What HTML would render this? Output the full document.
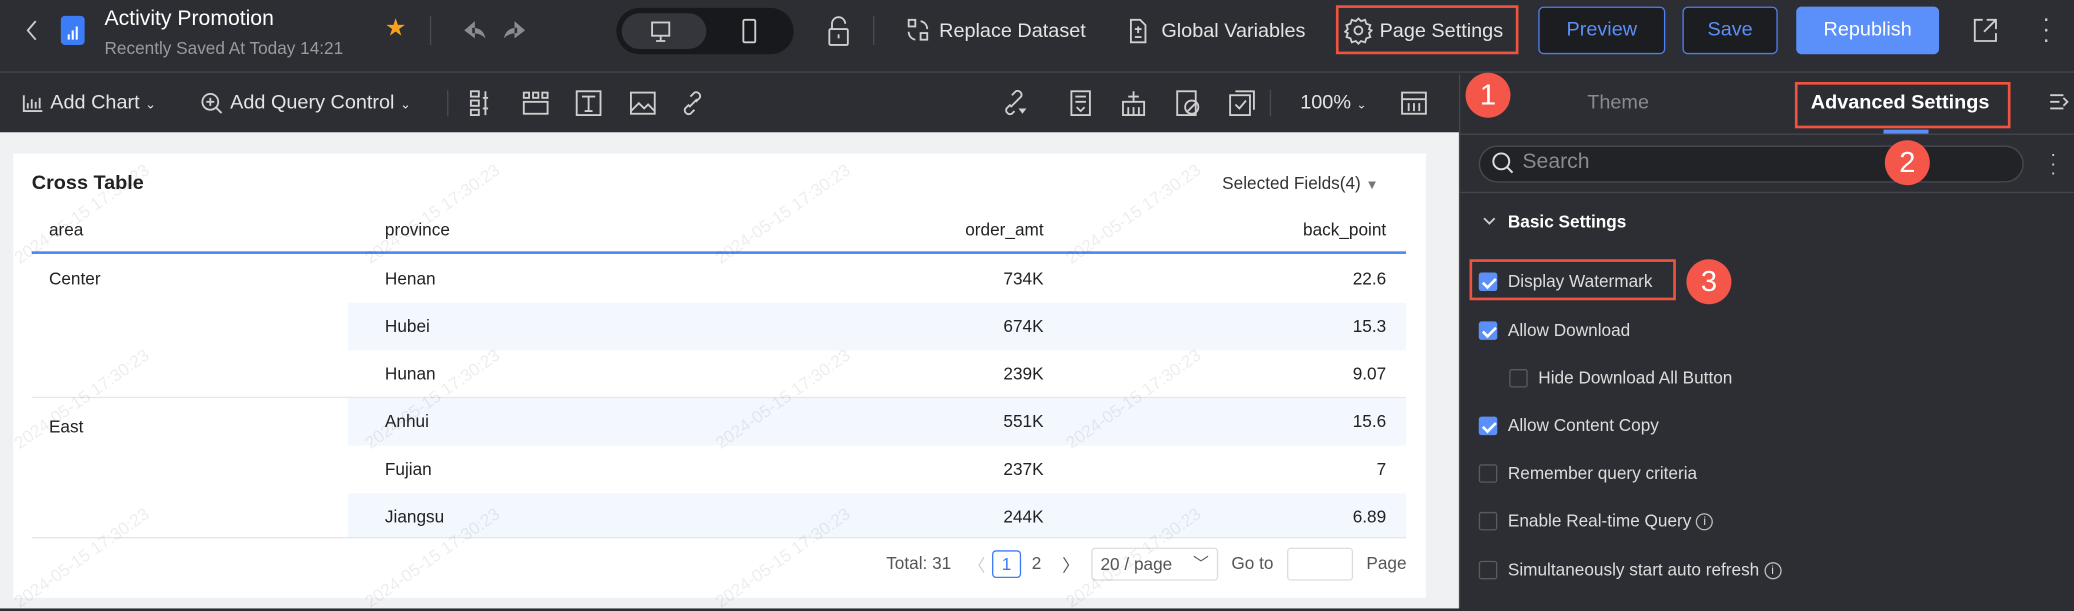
<!DOCTYPE html>
<html><head><meta charset="utf-8"><style>
*{box-sizing:border-box;margin:0;padding:0}
html,body{width:2074px;height:602px;overflow:hidden;background:#2d2e33}
#w{position:absolute;left:0;top:0;width:1568px;height:460px;transform:scale(1.32270);transform-origin:0 0;font-family:"Liberation Sans",sans-serif;color:#ddd;background:#2d2e33}
.a{position:absolute;white-space:nowrap}
.hd{left:0;top:0;width:1568px;height:55px;background:#2d2e33;border-bottom:1px solid #45464b}
.tb{left:0;top:56px;width:1568px;height:45px;background:#2d2e33}
.t14{font-size:15px;color:#e4e4e4}
.rb{border:2px solid #f0533f}
.badge{width:34px;height:34px;border-radius:50%;background:#f4574a;color:#fff;font-size:22px;text-align:center;line-height:34px}
.btn{height:36px;border-radius:4px;font-size:15px;text-align:center;line-height:34px}
.cb{width:14px;height:14px;border-radius:2px;border:1px solid #5a5b60;background:transparent}
.cb.on{background:#5b8ff9;border-color:#5b8ff9}
.cb.on:after{content:"";position:absolute;left:4px;top:1px;width:4px;height:8px;border:solid #fff;border-width:0 2px 2px 0;transform:rotate(45deg)}
.lbl{font-size:13px;color:#ddd}
.wm{font-size:13px;color:rgba(0,0,0,.07);transform:rotate(-35deg);transform-origin:0 0}
.td{font-size:13px;color:#222}
.ic{stroke:#cfcfcf;fill:none;stroke-width:1.4}
</style></head><body><div id="w">
<div class="a hd"></div>
<div class="a tb"></div>
<div class="a" style="left:0;top:100px;width:1103px;height:360px;background:#f0f1f3"></div>
<div class="a" style="left:1103px;top:56px;width:1px;height:404px;background:#45464b"></div>
<div class="a" style="left:1104px;top:101px;width:464px;height:1px;background:#45464b"></div>

<!-- header -->
<svg class="a" style="left:17px;top:12px" width="14" height="22"><path d="M10 4 L4 11 L10 18" class="ic" stroke-width="1.8"/></svg>
<div class="a" style="left:46px;top:12px;width:18px;height:22px;border-radius:3px;background:#3c7cf6"></div>
<svg class="a" style="left:46px;top:12px" width="18" height="22"><path d="M6 18V14M9 18V11M12 18V8" stroke="#fff" stroke-width="1.6"/></svg>
<div class="a" style="left:79px;top:6px;font-size:16px;color:#fff">Activity Promotion</div>
<div class="a" style="left:79px;top:29px;font-size:13px;color:#9a9a9e">Recently Saved At Today 14:21</div>
<div class="a" style="left:291px;top:11px;font-size:18px;color:#f7a21b">★</div>
<div class="a" style="left:325px;top:12px;width:1px;height:22px;background:#4a4b50"></div>
<svg class="a" style="left:347px;top:13px" width="66" height="20"><path d="M12 3 L4 10 L12 16 Z M10 8 C16 8 19 11 20 16 C17 13 14 12 10 12Z" fill="#8a8b90"/><path d="M42 3 L50 10 L42 16 Z M44 8 C38 8 35 11 34 16 C37 13 40 12 44 12Z" fill="#8a8b90"/></svg>
<div class="a" style="left:466px;top:6px;width:134px;height:35px;border-radius:18px;background:#18191c"></div>
<div class="a" style="left:470px;top:10px;width:64px;height:27px;border-radius:14px;background:#35363b"></div>
<svg class="a" style="left:490px;top:14px" width="20" height="20"><rect x="3" y="3" width="13" height="10" class="ic" stroke="#fff"/><path d="M9.5 13v4M6 17h7" class="ic" stroke="#fff"/></svg>
<svg class="a" style="left:557px;top:12px" width="20" height="24"><rect x="5" y="3" width="9" height="17" rx="1" class="ic"/></svg>
<svg class="a" style="left:624px;top:11px" width="20" height="26"><path d="M5 11V7a5 5 0 0 1 10 0" class="ic"/><rect x="3" y="11" width="14" height="12" rx="1" class="ic"/><path d="M10 15v3" class="ic"/></svg>
<div class="a" style="left:660px;top:12px;width:1px;height:22px;background:#4a4b50"></div>
<svg class="a" style="left:684px;top:13px" width="20" height="20"><rect x="3" y="2" width="5" height="5" class="ic"/><rect x="12" y="12" width="5" height="5" class="ic"/><path d="M12 3a6 6 0 0 1 5 6M8 17a6 6 0 0 1-5-6" class="ic"/></svg>
<div class="a t14" style="left:710px;top:15px">Replace Dataset</div>
<svg class="a" style="left:851px;top:12px" width="18" height="22"><path d="M4 3h7l4 4v13H4z" class="ic"/><path d="M7 10h5M9.5 8v5M7 16h5" class="ic"/></svg>
<div class="a t14" style="left:878px;top:15px">Global Variables</div>
<div class="a rb" style="left:1010px;top:4px;width:138px;height:37px"></div>
<svg class="a" style="left:1016px;top:12px" width="22" height="22"><circle cx="11" cy="11" r="3" class="ic"/><path d="M11 2l2 2 3-1 1 3 3 1-1 3 2 1-2 2 1 3-3 1-1 3-3-1-2 2-2-2-3 1-1-3-3-1 1-3-2-1 2-2-1-3 3-1 1-3 3 1z" class="ic"/></svg>
<div class="a t14" style="left:1043px;top:15px">Page Settings</div>
<div class="a btn" style="left:1163px;top:5px;width:96px;border:1px solid #4d7ff0;color:#5b8ff9;background:#1c1d21">Preview</div>
<div class="a btn" style="left:1272px;top:5px;width:72px;border:1px solid #4d7ff0;color:#5b8ff9;background:#1c1d21">Save</div>
<div class="a btn" style="left:1358px;top:5px;width:108px;background:#5b8ff9;color:#fff;line-height:36px">Republish</div>
<svg class="a" style="left:1490px;top:12px" width="22" height="22"><path d="M9 3H3v16h16v-6M12 3h7v7M19 3l-9 9" class="ic"/></svg>
<div class="a" style="left:1544px;top:10px;color:#ccc;font-size:18px;line-height:8px;width:6px">·<br>·<br>·</div>

<!-- toolbar -->
<svg class="a" style="left:16px;top:70px" width="18" height="16"><path d="M2 2v12h14M5 12V8M8 12V5M11 12V7M14 12V4" class="ic"/></svg>
<div class="a t14" style="left:38px;top:69px">Add Chart <span style="font-size:10px">⌄</span></div>
<svg class="a" style="left:151px;top:69px" width="18" height="18"><circle cx="8" cy="8" r="6" class="ic"/><path d="M8 5v6M5 8h6M12.5 12.5l4 4" class="ic"/></svg>
<div class="a t14" style="left:174px;top:69px">Add Query Control <span style="font-size:10px">⌄</span></div>
<div class="a" style="left:338px;top:68px;width:1px;height:20px;background:#4a4b50"></div>
<svg class="a" style="left:354px;top:67px" width="200" height="22"><rect x="2" y="2" width="6" height="4" class="ic"/><rect x="2" y="9" width="6" height="4" class="ic"/><rect x="2" y="16" width="6" height="4" class="ic"/><path d="M13 2v18M11 7h4M11 15h4" class="ic"/>
<rect x="42" y="3" width="4" height="4" class="ic"/><rect x="49" y="3" width="4" height="4" class="ic"/><rect x="56" y="3" width="4" height="4" class="ic"/><rect x="42" y="10" width="18" height="9" class="ic"/>
<rect x="82" y="2" width="18" height="18" class="ic"/><path d="M86 6h10M91 6v11M88 17h6" class="ic"/>
<rect x="123" y="3" width="18" height="16" class="ic"/><path d="M123 17l6-6 4 4 3-3 5 5" class="ic"/>
<path d="M167 12l-3 3a3 3 0 0 0 4 4l3-3M172 10l3-3a3 3 0 0 0-4-4l-3 3M167 14l6-6" class="ic"/></svg>
<svg class="a" style="left:756px;top:67px" width="200" height="22"><path d="M8 12l-3 3a3 3 0 0 0 4 4l2-2M13 9l3-3a3 3 0 0 0-4-4l-3 3M8 14l6-6" class="ic"/><path d="M14 15h6l-3 4z" fill="#cfcfcf"/>
<rect x="54" y="2" width="14" height="18" class="ic"/><path d="M57 6h8M57 10h8M58 14l3 3 3-3" class="ic"/>
<path d="M93 10h16v10H93zM101 2v8M97 6h8M97 14v6M101 14v6M105 14v6" class="ic"/>
<rect x="134" y="2" width="14" height="18" class="ic"/><circle cx="145" cy="14" r="5" class="ic"/><path d="M141 18l8-8" class="ic"/>
<rect x="174" y="5" width="15" height="15" class="ic"/><path d="M178 2h14v14M178 12l3 3 5-6" class="ic"/></svg>
<div class="a" style="left:960px;top:68px;width:1px;height:20px;background:#4a4b50"></div>
<div class="a t14" style="left:983px;top:69px">100% <span style="font-size:9px">⌄</span></div>
<svg class="a" style="left:1058px;top:68px" width="22" height="20"><rect x="2" y="2" width="18" height="16" class="ic"/><path d="M2 7h18M7 10v6M11 10v6M15 10v6" class="ic"/></svg>

<div class="a badge" style="left:1108px;top:55px">1</div>
<div class="a" style="left:1200px;top:69px;font-size:15px;color:#8a8b90">Theme</div>
<div class="a rb" style="left:1357px;top:62px;width:163px;height:35px"></div>
<div class="a" style="left:1369px;top:69px;font-size:15px;font-weight:bold;color:#fff">Advanced Settings</div>
<div class="a" style="left:1424px;top:98px;width:34px;height:3px;background:#5b8ff9"></div>
<svg class="a" style="left:1548px;top:69px" width="18" height="18"><path d="M2 3h10M2 8h7M2 13h10M12 5l3 3-3 3" class="ic"/></svg>

<!-- right panel -->
<div class="a" style="left:1118px;top:110px;width:412px;height:28px;border-radius:14px;background:#222327;border:1px solid #4a4b50"></div>
<svg class="a" style="left:1127px;top:114px" width="20" height="20"><circle cx="8" cy="8" r="6" stroke="#ddd" fill="none" stroke-width="1.5"/><path d="M12.5 12.5l4 4" stroke="#ddd" stroke-width="1.5"/></svg>
<div class="a" style="left:1151px;top:114px;font-size:16px;color:#8a8b90">Search</div>
<div class="a badge" style="left:1425px;top:106px">2</div>
<div class="a" style="left:1550px;top:113px;color:#ccc;font-size:14px;line-height:7px;width:6px">·<br>·<br>·</div>
<div class="a" style="left:1104px;top:145px;width:464px;height:1px;background:#45464b"></div>
<svg class="a" style="left:1120px;top:162px" width="12" height="10"><path d="M2 3l4 4 4-4" class="ic"/></svg>
<div class="a" style="left:1140px;top:160px;font-size:13px;font-weight:bold;color:#fff">Basic Settings</div>
<div class="a rb" style="left:1111px;top:196px;width:156px;height:31px"></div>
<div class="a badge" style="left:1275px;top:196px">3</div>
<div class="a cb on" style="left:1118px;top:206px"></div><div class="a lbl" style="left:1140px;top:205px">Display Watermark</div>
<div class="a cb on" style="left:1118px;top:243px"></div><div class="a lbl" style="left:1140px;top:242px">Allow Download</div>
<div class="a cb" style="left:1141px;top:279px"></div><div class="a lbl" style="left:1163px;top:278px">Hide Download All Button</div>
<div class="a cb on" style="left:1118px;top:315px"></div><div class="a lbl" style="left:1140px;top:314px">Allow Content Copy</div>
<div class="a cb" style="left:1118px;top:351px"></div><div class="a lbl" style="left:1140px;top:350px">Remember query criteria</div>
<div class="a cb" style="left:1118px;top:387px"></div><div class="a lbl" style="left:1140px;top:386px">Enable Real-time Query <span style="display:inline-block;width:13px;height:13px;border:1px solid #bbb;border-radius:50%;font-size:9px;text-align:center;line-height:11px;vertical-align:1px">i</span></div>
<div class="a cb" style="left:1118px;top:424px"></div><div class="a lbl" style="left:1140px;top:423px">Simultaneously start auto refresh <span style="display:inline-block;width:13px;height:13px;border:1px solid #bbb;border-radius:50%;font-size:9px;text-align:center;line-height:11px;vertical-align:1px">i</span></div>

<!-- card -->
<div class="a" style="left:10px;top:116px;width:1068px;height:336px;background:#fff"></div>
<div class="a" style="left:24px;top:130px;font-size:15px;font-weight:bold;color:#222">Cross Table</div>
<div class="a td" style="left:924px;top:131px;color:#333">Selected Fields(4) <span style="color:#777;font-size:10px">▼</span></div>
<div class="a td" style="left:37px;top:166px">area</div>
<div class="a td" style="left:291px;top:166px">province</div>
<div class="a td" style="left:700px;top:166px;width:89px;text-align:right">order_amt</div>
<div class="a td" style="left:948px;top:166px;width:100px;text-align:right">back_point</div>
<div class="a" style="left:24px;top:190px;width:1039px;height:1.5px;background:#4d88f7"></div>
<div class="a" style="left:263px;top:229px;width:800px;height:36px;background:#f3f7fe"></div>
<div class="a" style="left:263px;top:301px;width:800px;height:36px;background:#f3f7fe"></div>
<div class="a" style="left:263px;top:373px;width:800px;height:33px;background:#f3f7fe"></div>
<div class="a" style="left:24px;top:300px;width:1039px;height:1px;background:#e6e7ea"></div>
<div class="a" style="left:24px;top:406px;width:1039px;height:1px;background:#e6e7ea"></div>
<div class="a td" style="left:37px;top:203px">Center</div>
<div class="a td" style="left:37px;top:315px">East</div>
<div class="a td" style="left:291px;top:203px">Henan</div><div class="a td" style="left:700px;top:203px;width:89px;text-align:right">734K</div><div class="a td" style="left:948px;top:203px;width:100px;text-align:right">22.6</div>
<div class="a td" style="left:291px;top:239px">Hubei</div><div class="a td" style="left:700px;top:239px;width:89px;text-align:right">674K</div><div class="a td" style="left:948px;top:239px;width:100px;text-align:right">15.3</div>
<div class="a td" style="left:291px;top:275px">Hunan</div><div class="a td" style="left:700px;top:275px;width:89px;text-align:right">239K</div><div class="a td" style="left:948px;top:275px;width:100px;text-align:right">9.07</div>
<div class="a td" style="left:291px;top:311px">Anhui</div><div class="a td" style="left:700px;top:311px;width:89px;text-align:right">551K</div><div class="a td" style="left:948px;top:311px;width:100px;text-align:right">15.6</div>
<div class="a td" style="left:291px;top:347px">Fujian</div><div class="a td" style="left:700px;top:347px;width:89px;text-align:right">237K</div><div class="a td" style="left:948px;top:347px;width:100px;text-align:right">7</div>
<div class="a td" style="left:291px;top:383px">Jiangsu</div><div class="a td" style="left:700px;top:383px;width:89px;text-align:right">244K</div><div class="a td" style="left:948px;top:383px;width:100px;text-align:right">6.89</div>
<!-- pagination -->
<div class="a td" style="left:670px;top:418px;color:#555">Total: 31</div>
<div class="a td" style="left:732px;top:417px;color:#ccc">〈</div>
<div class="a" style="left:750px;top:416px;width:22px;height:21px;border:1px solid #3c7cf6;border-radius:3px;color:#3c7cf6;font-size:13px;text-align:center;line-height:19px">1</div>
<div class="a td" style="left:780px;top:418px;color:#555">2</div>
<div class="a td" style="left:803px;top:417px;color:#555">〉</div>
<div class="a" style="left:825px;top:414px;width:96px;height:25px;border:1px solid #ddd;border-radius:3px;font-size:13px;color:#555;padding:4px 6px">20 / page <span style="position:absolute;right:6px;top:2px;font-size:12px">﹀</span></div>
<div class="a td" style="left:931px;top:418px;color:#555">Go to</div>
<div class="a" style="left:973px;top:414px;width:50px;height:25px;border:1px solid #ddd;border-radius:3px"></div>
<div class="a td" style="left:1033px;top:418px;color:#555">Page</div>
<!-- watermarks -->
<div class="a wm" style="left:8px;top:190px">2024-05-15 17:30:23</div>
<div class="a wm" style="left:273px;top:190px">2024-05-15 17:30:23</div>
<div class="a wm" style="left:538px;top:190px">2024-05-15 17:30:23</div>
<div class="a wm" style="left:803px;top:190px">2024-05-15 17:30:23</div>
<div class="a wm" style="left:8px;top:330px">2024-05-15 17:30:23</div>
<div class="a wm" style="left:273px;top:330px">2024-05-15 17:30:23</div>
<div class="a wm" style="left:538px;top:330px">2024-05-15 17:30:23</div>
<div class="a wm" style="left:803px;top:330px">2024-05-15 17:30:23</div>
<div class="a wm" style="left:8px;top:450px">2024-05-15 17:30:23</div>
<div class="a wm" style="left:273px;top:450px">2024-05-15 17:30:23</div>
<div class="a wm" style="left:538px;top:450px">2024-05-15 17:30:23</div>
<div class="a wm" style="left:803px;top:450px">2024-05-15 17:30:23</div>
</div></body></html>
